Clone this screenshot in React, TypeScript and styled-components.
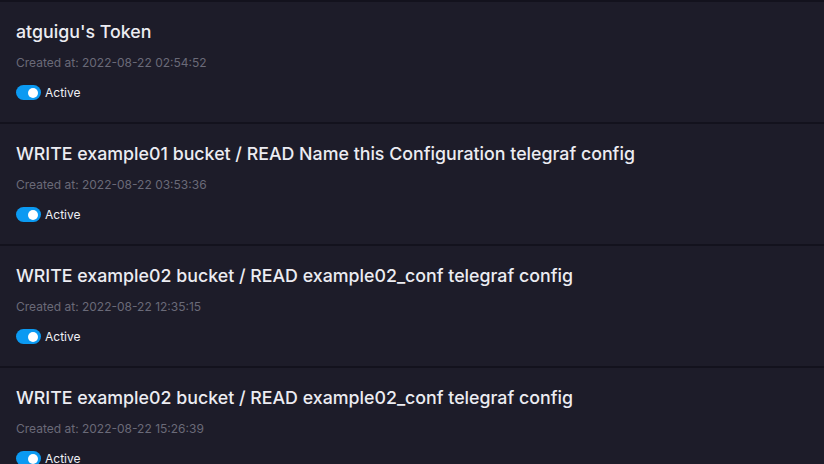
import React from "react";
import styled, { createGlobalStyle } from "styled-components";

interface TokenProps {
    title: string
    created: string
    active?: boolean
}

const tokens: TokenProps[] = [
    { title: "atguigu's Token", created: "2022-08-22 02:54:52", active: true },
    { title: "WRITE example01 bucket / READ Name this Configuration telegraf config", created: "2022-08-22 03:53:36", active: true },
    { title: "WRITE example02 bucket / READ example02_conf telegraf config", created: "2022-08-22 12:35:15", active: true },
    { title: "WRITE example02 bucket / READ example02_conf telegraf config", created: "2022-08-22 15:26:39", active: true },
];

const GlobalStyle = createGlobalStyle`
    html, body {
        margin: 0;
        padding: 0;
        background: #13121d;
        overflow: hidden;
    }
    body {
        font-family: Inter, "Noto Sans", sans-serif;
    }
`

const TokenCard: React.FunctionComponent<TokenProps> = ({ title, created, active }) => {
    return (
        <Card>
            <Title>{title}</Title>
            <Meta>Created at: {created}</Meta>
            <Status>
                <Toggle $on={!!active} />
                <span>Active</span>
            </Status>
        </Card>
    )
}

export default function App() {
    return (
        <>
            <GlobalStyle />
            <List>
                {tokens.map((t, i) => (
                    <TokenCard key={i} {...t} />
                ))}
            </List>
        </>
    )
}

const List = styled.div`
    display: flex;
    flex-direction: column;
    gap: 2px;
    padding-top: 2px;
    height: 464px;
    overflow: hidden;
`

const Card = styled.div`
    background: #1d1c29;
    height: 120px;
    flex-shrink: 0;
    box-sizing: border-box;
    padding: 20px 16px 0;
    display: flex;
    flex-direction: column;
`

const Title = styled.div`
    color: #ececf2;
    font-size: 17.8px;
    font-weight: 500;
    line-height: 20px;
    white-space: nowrap;
`

const Meta = styled.div`
    color: #6a6a78;
    font-size: 12px;
    line-height: 14px;
    margin-top: 14px;
`

const Status = styled.div`
    display: flex;
    align-items: center;
    gap: 4px;
    margin-top: 15px;
    color: #f0f0f5;
    font-size: 12px;
`

const Toggle = styled.div<{ $on: boolean }>`
    width: 25px;
    height: 15px;
    border-radius: 8px;
    background: ${p => (p.$on ? "#0b9af2" : "#3a3a48")};
    position: relative;
    &::after {
        content: "";
        position: absolute;
        top: 2.5px;
        left: ${p => (p.$on ? "12px" : "3px")};
        width: 10px;
        height: 10px;
        border-radius: 50%;
        background: #fff;
    }
`
